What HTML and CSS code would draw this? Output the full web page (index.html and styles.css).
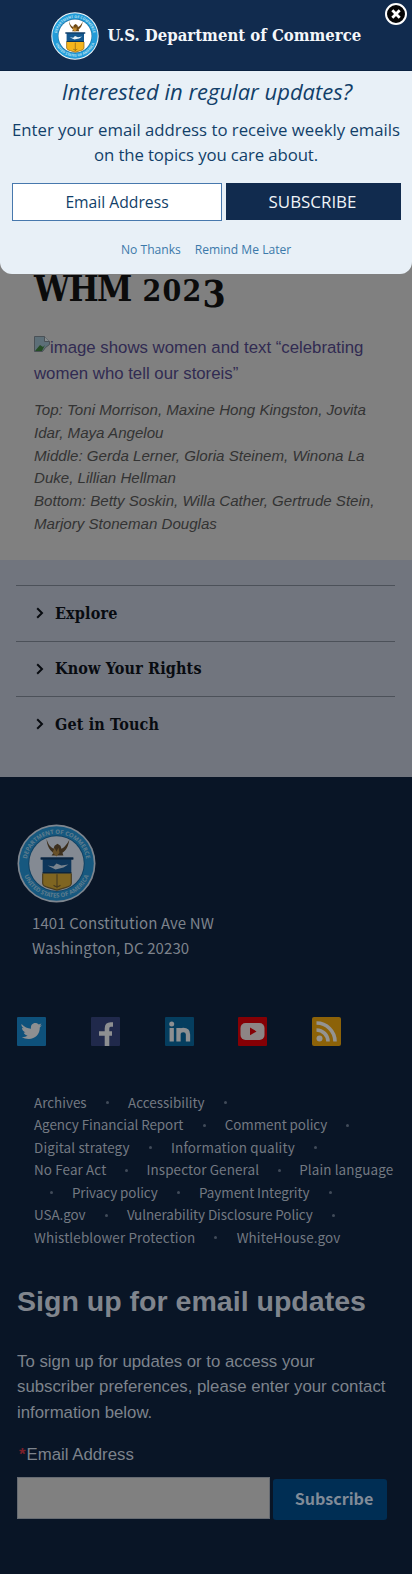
FILE: index.html
```html
<!DOCTYPE html>
<html lang="en">
<head>
<meta charset="utf-8">
<title>WHM 2023</title>
<link rel="stylesheet" href="styles.css">
</head>
<body>
<div class="page">
  <main class="article">
    <h1>WHM <span class="fig">202<span class="drop">3</span></span></h1>
    <a class="alt" href="#"><svg class="broken" width="16" height="16" viewBox="0 0 16 16"><path d="M.5.500h10l5 5v3l-4 3-3 4h-8z" fill="#5d6f78" stroke="#4a5156"/><path d="M1 15l5-6 3 2 2-2-3 6z" fill="#254d25"/><path d="M10.500.500v5h5" fill="#868b8c" stroke="#4a5156"/></svg>image shows women and text “celebrating<br>women who tell our storeis”</a>
    <p class="caption">Top: Toni Morrison, Maxine Hong Kingston, Jovita<br>Idar, Maya Angelou<br>Middle: Gerda Lerner, Gloria Steinem, Winona La<br>Duke, Lillian Hellman<br>Bottom: Betty Soskin, Willa Cather, Gertrude Stein,<br>Marjory Stoneman Douglas</p>
  </main>

  <nav class="accordion">
    <a class="item" href="#"><svg class="chev" viewBox="0 0 8 12"><path d="M1.200 1.200L6 6l-4.800 4.800"/></svg><span>Explore</span></a>
    <a class="item" href="#"><svg class="chev" viewBox="0 0 8 12"><path d="M1.200 1.200L6 6l-4.800 4.800"/></svg><span>Know Your Rights</span></a>
    <a class="item" href="#"><svg class="chev" viewBox="0 0 8 12"><path d="M1.200 1.200L6 6l-4.800 4.800"/></svg><span>Get in Touch</span></a>
  </nav>

  <footer class="footer">
    <svg class="footer-seal" viewBox="0 0 80 80">
      <g id="seal">
        <circle cx="40" cy="40" r="39.5" fill="#f4f7f8"/>
        <circle cx="40" cy="40" r="37.8" fill="#239bd8"/>
        <circle cx="40" cy="40" r="28.6" fill="#176b9c"/>
        <circle cx="40" cy="40" r="27.6" fill="#fff"/>
        <path id="arcTop" d="M9.500 43A30.600 30.600 0 1 1 70.500 43" fill="none"/>
        <path id="arcBottom" d="M5 43A35.200 35.200 0 0 0 75 43" fill="none"/>
        <text class="seal-text"><textPath href="#arcTop" startOffset="50%" text-anchor="middle">DEPARTMENT OF COMMERCE</textPath></text>
        <text class="seal-text"><textPath href="#arcBottom" startOffset="50%" text-anchor="middle">UNITED STATES OF AMERICA</textPath></text>
        <path d="M30 15c1 5 4 9 7 10l1-3 3-2 3 2 1 3c3-1 6-5 8-9-1 6-3 11-7 13l1 3h-12l2-3c-4-2-7-8-7-14z" fill="#6f4a17"/>
        <path d="M36 29l2-5 2 4 2-4 1 5-3 4z" fill="#c78e2e"/>
        <path d="M24 34h33v2h-2v14H26V36h-2z" fill="#14588f"/>
        <path d="M26 49h29v11q0 3-6 4.500l-8.500 2.500-8.500-2.500Q26 63 26 60z" fill="#f4b51d"/>
        <path d="M24 34h33v2H24zM26 48.500h29v1.500H26z" fill="#0c3359"/>
        <path d="M31 42l6 1 3-3 5 2 7-1-5 3-8 2z" fill="#e9f3f7"/>
        <path d="M26 50v10q0 3 6 4.500l8.500 2.500 8.500-2.500q6-1.500 6-4.500V50M40.500 51v14M37 62q3.500 3 7 0" fill="none" stroke="#8b6518" stroke-width="1.200"/>
      </g>
    </svg>
    <address>1401 Constitution Ave NW<br>Washington, DC 20230</address>
    <div class="social">
      <svg viewBox="0 0 29 29"><rect width="29" height="29" rx="1" fill="#0e517b"/><path d="M4.500 7c3 3.200 6 4.500 9.500 4.700-.5-3.500 1.500-5.700 4.300-5.700 1.500 0 2.500.6 3.400 1.400l2.800-1-1.700 2.300 2-.4-2 2.200c.2 6.500-4.500 11.500-11 11.500-3 0-5-.7-7-1.900 2.400.1 4.200-.5 5.800-1.700-2-.2-3.300-1.300-3.900-3h1.800c-2.300-.8-3.500-2.400-3.500-4.600l1.800.5C4.800 10 4.200 8.700 4.500 7z" fill="#8d8f91"/></svg>
      <svg viewBox="0 0 29 29"><rect width="29" height="29" rx="1" fill="#20294b"/><path d="M16 29V11.500q0-4 3.700-4h2.300M8 16.500h13" fill="none" stroke="#8d8f91" stroke-width="4.600"/></svg>
      <svg viewBox="0 0 29 29"><rect width="29" height="29" rx="1" fill="#053e5f"/><circle cx="6.700" cy="7" r="2.500" fill="#8d8f91"/><path d="M6.700 11v13.500M13.500 11v13.500M13.500 17.500q0-4.500 4.800-4.500 4.700 0 4.700 4.500v7" fill="none" stroke="#8d8f91" stroke-width="4.300"/></svg>
      <svg viewBox="0 0 29 29"><rect width="29" height="29" rx="1" fill="#850005"/><rect x="2.500" y="6" width="24" height="17" rx="5" fill="#8d8585"/><path d="M12 10.500v7.800l6.500-3.900z" fill="#850005"/></svg>
      <svg viewBox="0 0 29 29"><rect width="29" height="29" rx="2" fill="#8c6208"/><circle cx="7.500" cy="21.500" r="3" fill="#949391"/><path d="M4.500 13a11.500 11.500 0 0 1 11.500 11.500M4.500 6A18.500 18.500 0 0 1 23 24.500" fill="none" stroke="#949391" stroke-width="3.600"/></svg>
    </div>
    <ul class="links">
      <li><a>Archives</a><i></i><a>Accessibility</a><i></i></li>
      <li class="tight"><a>Agency Financial Report</a><i></i><a>Comment policy</a><i></i></li>
      <li class="loose"><a>Digital strategy</a><i></i><a>Information quality</a><i></i></li>
      <li class="even"><a>No Fear Act</a><i></i><a>Inspector General</a><i></i><a>Plain language</a></li>
      <li class="wrapped tight"><i></i><a>Privacy policy</a><i></i><a>Payment Integrity</a><i></i></li>
      <li class="tight"><a>USA.gov</a><i></i><a>Vulnerability Disclosure Policy</a><i></i></li>
      <li class="loose"><a>Whistleblower Protection</a><i></i><a>WhiteHouse.gov</a></li>
    </ul>
    <h2>Sign up for email updates</h2>
    <p class="intro">To sign up for updates or to access your<br>subscriber preferences, please enter your contact<br>information below.</p>
    <label class="field" for="mail"><span>*</span>Email Address</label>
    <div class="signup"><input id="mail" type="text"><button>Subscribe</button></div>
  </footer>
</div>

<section class="modal">
  <header class="modal-head">
    <svg class="modal-seal" viewBox="0 0 80 80"><use href="#seal"/></svg>
    <span class="brand">U.S. Department of Commerce</span>
  </header>
  <svg class="close" viewBox="0 0 24 24"><circle cx="12" cy="12" r="10" fill="#050505" stroke="#fff" stroke-width="2"/><path d="M8.300 8.300l7.400 7.400M15.700 8.300l-7.400 7.400" stroke="#fff" stroke-width="2.800"/></svg>
  <h3>Interested in regular updates?</h3>
  <p class="pitch">Enter your email address to receive weekly emails<br><span>on the topics you care about.</span></p>
  <div class="modal-form"><span class="email">Email Address</span><span class="go">SUBSCRIBE</span></div>
  <div class="choices"><a class="no">No Thanks</a><a class="later">Remind Me Later</a></div>
</section>
</body>
</html>
```
FILE: styles.css
```css
* { box-sizing: border-box; }
body { margin: 0; width: 412px; height: 1574px; overflow: hidden; position: relative; background: #808080; font-family: "Liberation Sans", Arial, sans-serif; white-space: nowrap; }
a { text-decoration: none; color: inherit; }
h1, h2, h3, p, ul { margin: 0; padding: 0; font-weight: normal; }
.seal-text { font: bold 6px "Noto Sans", sans-serif; fill: #b5e0f2; }

.article { height: 560px; padding: 264px 0 0 34px; }
h1 { height: 71px; font: bold 35.500px/50px "DejaVu Serif Condensed", "DejaVu Serif", serif; font-stretch: condensed; color: #0b0b0b; letter-spacing: -1.500px; }
.fig { margin-left: 2px; font-size: 30px; letter-spacing: 1.200px; }
.drop { position: relative; top: 6px; font-size: 37px; line-height: 30px; }
.alt { display: block; font-size: 16.800px; line-height: 25.500px; color: #312b52; }
.broken { vertical-align: 1px; }
.caption { margin-top: 13px; font-size: 15.100px; line-height: 22.800px; font-style: italic; color: #333; }

.accordion { height: 217px; padding: 25px 17px 0 16px; background: #71757e; }
.item { display: flex; align-items: center; height: 55.500px; border-top: 1px solid #4c5159; padding-left: 20px; font: bold 16px "DejaVu Serif Condensed", "DejaVu Serif", serif; font-stretch: condensed; letter-spacing: .15px; color: #080b10; }
.chev { width: 8px; height: 12px; margin-right: 11px; fill: none; stroke: #080b10; stroke-width: 2; }

.footer { height: 797px; padding: 47px 0 0 17px; background: #091526; color: #7d838c; }
.footer-seal { display: block; width: 79px; height: 79px; opacity: .5; }
address { margin: 7px 0 0 15px; font: normal 15px/25px "Noto Sans CJK SC", sans-serif; letter-spacing: .1px; }
.social { display: flex; gap: 44.800px; margin-top: 57px; }
.social svg { width: 29px; height: 29px; flex: none; }
.links { list-style: none; margin: 44.500px 0 0 17px; font: 13.450px/22.500px "Noto Sans CJK SC", sans-serif; color: #737982; }
.links li { display: flex; align-items: center; height: 22.500px; }
.links .tight { letter-spacing: -.06px; }
.links .even { letter-spacing: .12px; }
.links .even i { margin: 2px 18.500px 0; }
.links .loose { letter-spacing: .13px; }
.links .wrapped { margin-left: -3.500px; }
.links i { flex: none; width: 3px; height: 3px; margin: 2px 19.200px 0; border-radius: 50%; background: #414b59; }
h2 { margin-top: 32.500px; font-size: 28.550px; line-height: 40px; font-weight: bold; color: #80858d; }
.intro { margin-top: 28px; font-size: 16.800px; line-height: 25.500px; }
.field { display: block; margin-top: 17px; font-size: 16.800px; line-height: 25px; }
.field span { margin: 0 1px 0 2px; color: #7a1f2a; font-weight: bold; }
.signup { display: flex; gap: 3px; align-items: flex-start; margin-top: 10px; }
.signup input { width: 253px; height: 42px; border: 1px solid #666b72; background: #808080; }
.signup button { width: 114px; height: 41px; margin-top: 2px; padding: 0 0 3px 8px; border: 0; border-radius: 3px; background: #002e54; color: #808b98; font: bold 16.100px "Noto Sans CJK SC", sans-serif; }

.modal { position: absolute; top: 0; left: 0; width: 412px; height: 274px; border-radius: 0 0 12px 12px; background: #e8f0f7; color: #123f69; font-family: "Open Sans", sans-serif; text-align: center; }
.modal-head { display: flex; height: 71px; padding: 12px 0 0 51px; background: #112b4e; border-bottom: 1px solid #0a2140; }
.modal-seal { width: 48px; height: 48px; }
.brand { margin-left: 8.500px; font: bold 16.600px/47px "DejaVu Serif Condensed", "DejaVu Serif", serif; font-stretch: condensed; color: #f4f7fa; }
.close { position: absolute; left: 384px; top: 2px; width: 24px; height: 24px; }
h3 { padding-left: 2px; font-size: 22px; line-height: 41px; font-style: italic; }
.pitch { font-size: 16.750px; line-height: 25px; margin-top: 5px; }
.pitch span { letter-spacing: -.1px; }
.modal-form { display: flex; gap: 4px; margin: 16px 0 0 12px; }
.modal-form span { height: 38px; font-size: 15.700px; line-height: 37px; }
.email { width: 210px; border: 1px solid #4778ad; background: #fff; }
.modal-form .go { width: 175px; height: 37px; padding-right: 2px; font-size: 16.900px; line-height: 38px; background: #112b4e; color: #f0f4f8; }
.choices { display: flex; gap: 14px; margin: 19px 0 0 121px; font-size: 12.100px; line-height: 20px; color: #3c79aa; }
```
